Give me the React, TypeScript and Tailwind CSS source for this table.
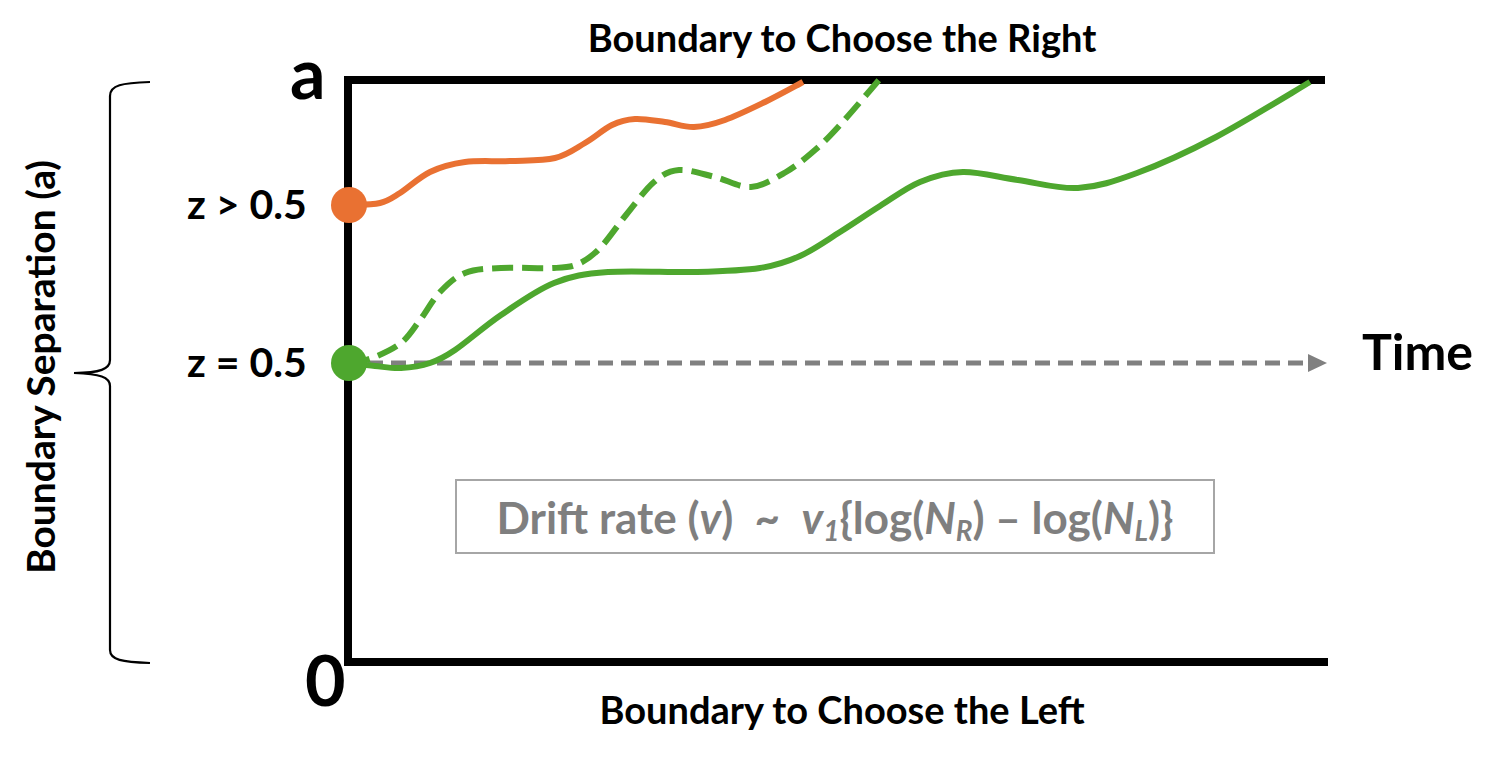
import React from 'react';

type Pt = [number, number];

const ORANGE = '#E97132';
const GREEN = '#4EA72E';
const GRAY = '#808080';

// catmull-rom -> cubic bezier so the traces stay smooth
function smoothPath(pts: Pt[]): string {
  let d = `M${pts[0][0]},${pts[0][1]}`;
  for (let i = 0; i < pts.length - 1; i++) {
    const p0 = pts[i - 1] || pts[i];
    const p1 = pts[i];
    const p2 = pts[i + 1];
    const p3 = pts[i + 2] || p2;
    const c1x = p1[0] + (p2[0] - p0[0]) / 6;
    const c1y = p1[1] + (p2[1] - p0[1]) / 6;
    const c2x = p2[0] - (p3[0] - p1[0]) / 6;
    const c2y = p2[1] - (p3[1] - p1[1]) / 6;
    d += ` C${c1x.toFixed(1)},${c1y.toFixed(1)} ${c2x.toFixed(1)},${c2y.toFixed(1)} ${p2[0]},${p2[1]}`;
  }
  return d;
}

const orangeTrace: Pt[] = [
  [349, 205], [380, 203], [400, 193], [430, 172], [465, 162], [510, 161], [555, 158],
  [585, 143], [612, 125], [635, 119], [665, 122], [694, 127], [725, 120], [765, 102], [803, 82],
];

const dashedTrace: Pt[] = [
  [349, 363], [372, 358], [401, 343], [420, 320], [440, 292], [465, 273], [501, 268], [554, 268],
  [578, 264], [600, 248], [626, 215], [654, 182], [679, 170], [715, 177], [751, 187], [786, 172],
  [815, 150], [840, 125], [879, 80],
];

const solidTrace: Pt[] = [
  [349, 363], [375, 366], [401, 368], [430, 363], [455, 350], [501, 315], [554, 283], [608, 272],
  [697, 272], [760, 268], [800, 256], [840, 232], [880, 206], [920, 182], [963, 172], [1018, 180],
  [1078, 188], [1137, 173], [1216, 137], [1310, 82],
];

function Plot() {
  return (
    <svg className="absolute inset-0" width="1501" height="758" viewBox="0 0 1501 758">
      {/* left brace */}
      <path
        d="M150,82 C122,83 110,85 110,96 L110,360 C110,369 100,373 74,373 C100,374 110,377 110,386 L110,650 C110,660 122,662 150,663"
        fill="none"
        stroke="#000"
        strokeWidth="2.2"
      />
      {/* boundaries */}
      <line x1="344" y1="80" x2="1325" y2="80" stroke="#000" strokeWidth="8" />
      <line x1="348" y1="76" x2="348" y2="666" stroke="#000" strokeWidth="8" />
      <line x1="344" y1="662" x2="1328" y2="662" stroke="#000" strokeWidth="8" />

      {/* time arrow */}
      <line x1="368" y1="363" x2="1308" y2="363" stroke={GRAY} strokeWidth="5" strokeDasharray="15 8" />
      <polygon points="1308,354 1327,363 1308,372" fill={GRAY} />

      <path d={smoothPath(orangeTrace)} fill="none" stroke={ORANGE} strokeWidth="6" />
      <path d={smoothPath(dashedTrace)} fill="none" stroke={GREEN} strokeWidth="6" strokeDasharray="21 9" />
      <path d={smoothPath(solidTrace)} fill="none" stroke={GREEN} strokeWidth="6" />

      <circle cx="349" cy="205" r="18" fill={ORANGE} />
      <circle cx="349" cy="363" r="18" fill={GREEN} />
    </svg>
  );
}

export default function App() {
  return (
    <div className="relative w-[1501px] h-[758px] overflow-hidden bg-white font-['Lato',sans-serif] font-bold text-black">
      <Plot />

      <div className="absolute left-[842px] top-[18px] -translate-x-1/2 whitespace-nowrap text-[38px] leading-none">
        Boundary to Choose the Right
      </div>
      <div className="absolute left-[842px] top-[690px] -translate-x-1/2 whitespace-nowrap text-[38px] leading-none">
        Boundary to Choose the Left
      </div>

      <div className="absolute left-[290px] top-[37px] text-[70px] leading-none">a</div>
      <div className="absolute left-[305px] top-[644px] text-[70px] leading-none">0</div>

      <div className="absolute left-[187px] top-[183px] whitespace-nowrap text-[41px] leading-none">z &gt; 0.5</div>
      <div className="absolute left-[187px] top-[341px] whitespace-nowrap text-[41px] leading-none">z = 0.5</div>

      <div className="absolute left-[1362px] top-[326px] text-[50px] leading-none">Time</div>

      <div className="absolute left-[40px] top-[367px] -translate-x-1/2 -translate-y-1/2 -rotate-90 whitespace-nowrap text-[39px] leading-none">
        Boundary Separation (a)
      </div>

      <div className="absolute left-[455px] top-[479px] flex h-[75px] w-[760px] items-center justify-center border-2 border-[#a6a6a6] bg-white">
        <span className="whitespace-nowrap text-[44px] leading-none text-[#7f7f7f]">
          Drift rate (<i>v</i>)&nbsp;&nbsp;~&nbsp;&nbsp;<i>v</i>
          <sub className="text-[28px] italic">1</sub>
          {'{log('}
          <i>N</i>
          <sub className="text-[28px] italic">R</sub>
          {') – log('}
          <i>N</i>
          <sub className="text-[28px] italic">L</sub>
          {')}'}
        </span>
      </div>
    </div>
  );
}
